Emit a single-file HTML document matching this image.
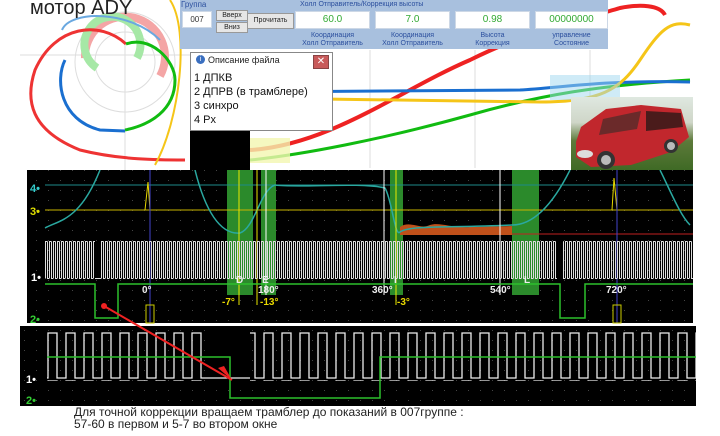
<!DOCTYPE html>
<html><head><meta charset="utf-8"><style>
body{margin:0;width:720px;height:436px;overflow:hidden;background:#fff;font-family:"Liberation Sans","Noto Sans CJK SC",sans-serif;position:relative}
.a{position:absolute}
.box{position:absolute;background:#fff;border:1px solid #cdd8e6;font-size:10px;text-align:center;color:#3a3}
.lbl{position:absolute;font-size:7px;color:#2b4f9e;text-align:center;line-height:8px}
.btn{position:absolute;background:#e6e6e6;border:1px solid #999;font-size:7px;text-align:center;color:#222}
</style></head><body>
<svg class="a" style="left:0;top:0" width="720" height="172">
 <g stroke="#ddd" fill="none">
  <line x1="20" y1="55" x2="190" y2="55"/><line x1="125" y1="0" x2="125" y2="170"/>
  <circle cx="125" cy="62" r="50"/><circle cx="125" cy="62" r="30"/>
  <line x1="370" y1="50" x2="370" y2="168"/><line x1="475" y1="50" x2="475" y2="168"/><line x1="590" y1="50" x2="590" y2="100"/>
 </g>
 <path d="M125 58 m-40 0 a40 40 0 1 1 75 18" stroke="#f4a5a5" stroke-width="8" fill="none"/>
 <path d="M125 58 m-28 10 a28 28 0 1 1 40 -10" stroke="#a6e8a6" stroke-width="8" fill="none"/>
 <path d="M62 30 C70 10 130 10 160 40" stroke="#6aa8e0" stroke-width="2" fill="none"/>
 <path d="M126 44 C100 20 55 25 35 70 C25 100 30 130 80 150 C120 160 160 160 185 160" stroke="#e33" stroke-width="3" fill="none"/>
 <path d="M126 44 C150 35 175 60 175 80 C175 110 150 125 125 130" stroke="#1b1" stroke-width="3" fill="none"/>
 <path d="M65 60 C55 80 60 120 100 130 L125 131" stroke="#1a6fd0" stroke-width="3" fill="none"/>
 <path d="M170 0 C190 30 180 120 155 165" stroke="#f5c518" stroke-width="2" fill="none"/>
 <path d="M250 150 C330 145 400 90 470 60 C530 30 580 20 620 8 C640 4 660 5 665 15" stroke="#e22" stroke-width="4" fill="none"/>
 <path d="M250 160 C300 155 380 140 470 115 C540 95 600 85 690 80" stroke="#1b1" stroke-width="3" fill="none"/>
 <path d="M250 92 L520 90 C560 88 600 80 690 82" stroke="#1a6fd0" stroke-width="3" fill="none"/>
 <path d="M250 98 L540 102 C600 102 620 90 640 60 C660 30 670 20 690 25" stroke="#f5c518" stroke-width="3" fill="none"/>
 <rect x="550" y="75" width="70" height="25" fill="#9fd8f0" opacity=".5"/>
 <rect x="250" y="138" width="40" height="25" fill="#f3f6b0" opacity=".8"/>
 <rect x="190" y="128" width="60" height="44" fill="#000"/>
</svg>
<div class="a" style="left:30px;top:-3px;font-size:20px;color:#222">мотор ADY</div>
<div class="a" style="left:180px;top:0;width:428px;height:49px;background:#a8c0de"></div>
<div class="lbl" style="left:181px;top:1px;font-size:8px">Группа</div>
<div class="lbl" style="left:300px;top:1px;width:300px;text-align:left;font-size:7px">Холл Отправитель/Коррекция высоты</div>
<div class="box" style="left:182px;top:11px;width:28px;height:15px;line-height:15px;color:#333;font-size:8px">007</div>
<div class="btn" style="left:216px;top:10px;width:30px;height:9px;line-height:9px">Вверх</div>
<div class="btn" style="left:216px;top:22px;width:30px;height:9px;line-height:9px">Вниз</div>
<div class="btn" style="left:247px;top:13px;width:45px;height:14px;line-height:14px">Прочитать</div>
<div class="box" style="left:295px;top:11px;width:73px;height:16px;line-height:16px">60.0</div>
<div class="box" style="left:375px;top:11px;width:73px;height:16px;line-height:16px">7.0</div>
<div class="box" style="left:455px;top:11px;width:73px;height:16px;line-height:16px">0.98</div>
<div class="box" style="left:535px;top:11px;width:71px;height:16px;line-height:16px">00000000</div>
<div class="lbl" style="left:295px;top:32px;width:75px">Координация<br>Холл Отправитель</div>
<div class="lbl" style="left:375px;top:32px;width:75px">Координация<br>Холл Отправитель</div>
<div class="lbl" style="left:455px;top:32px;width:75px">Высота<br>Коррекция</div>
<div class="lbl" style="left:535px;top:32px;width:73px">управление<br>Состояние</div>
<div class="a" style="left:190px;top:52px;width:141px;height:77px;background:#fff;border:1px solid #888"></div>
<div class="a" style="left:196px;top:55px;width:9px;height:9px;border-radius:50%;background:#3a6fc0;color:#fff;font-size:7px;text-align:center;line-height:9px">i</div>
<div class="a" style="left:208px;top:55px;font-size:9px;color:#222">Описание файла</div>
<div class="a" style="left:313px;top:55px;width:14px;height:12px;background:#c85a5a;border:1px solid #844;color:#fff;font-size:10px;line-height:12px;text-align:center">✕</div>
<div class="a" style="left:194px;top:71px;font-size:11px;line-height:14px;color:#111">1 ДПКВ<br>2 ДПРВ (в трамблере)<br>3 синхро<br>4 Px</div>
<div class="a" style="left:571px;top:97px;width:122px;height:73px;background:linear-gradient(#dfe8e0 0%,#cfd6c8 35%,#5d7a3a 60%,#3f6a25 100%)"></div>
<svg class="a" style="left:571px;top:97px" width="122" height="73">
 <path d="M5 45 L10 30 L35 12 L70 8 L110 12 L118 40 L100 55 L60 68 L20 70 L5 60Z" fill="#c1272d"/>
 <path d="M32 22 L70 14 L66 32 L28 38Z" fill="#6b2a2a"/>
 <path d="M75 14 L110 16 L112 30 L75 34Z" fill="#4a1b1b"/>
 <circle cx="35" cy="63" r="9" fill="#333"/><circle cx="35" cy="63" r="5" fill="#bbb"/>
 <circle cx="100" cy="49" r="7" fill="#333"/><circle cx="100" cy="49" r="4" fill="#bbb"/>
 <ellipse cx="14" cy="57" rx="8" ry="4" fill="#ddd"/>
</svg>
<svg class="a" style="left:0;top:170px" width="720" height="266">
 <defs>
  <pattern id="p1" x="45" y="71" width="4" height="40" patternUnits="userSpaceOnUse"><path d="M0.5 0.5V37.5M2.5 0.5V37.5M0 0.5H2.5M2 37.5H4.5" stroke="#ddd" stroke-width="1" fill="none"/></pattern>
  <pattern id="p2" x="47" y="162" width="18" height="48" patternUnits="userSpaceOnUse"><path d="M0 46H1V1H10V46H18" stroke="#eee" stroke-width="1.3" fill="none"/></pattern>
  <pattern id="g" width="12" height="10" patternUnits="userSpaceOnUse"><rect x="0" y="0" width="1" height="1" fill="#444"/></pattern>
 </defs>
 <rect x="27" y="0" width="666" height="153" fill="#000"/>
 <rect x="27" y="0" width="666" height="153" fill="url(#g)"/>
 <rect x="227" y="0" width="26" height="125" fill="#2b8a2b"/>
 <rect x="261" y="0" width="15" height="125" fill="#2b8a2b"/>
 <rect x="390" y="0" width="13" height="125" fill="#2b8a2b"/>
 <rect x="512" y="0" width="27" height="125" fill="#2b8a2b"/>
 <line x1="45" y1="15" x2="693" y2="15" stroke="#1e8a8a"/>
 <line x1="45" y1="40" x2="693" y2="40" stroke="#c8b400"/>
 <line x1="400" y1="64" x2="693" y2="64" stroke="#c02020"/>
 <path d="M400 65 L400 57 C410 50 420 60 430 55 C440 52 450 58 470 57 L512 56 L512 65Z" fill="#c0501a"/>
 <path d="M45 58 C60 50 80 50 100 0 M195 0 C205 40 220 65 240 63 C255 58 260 20 275 15 C300 18 360 12 385 18 C392 30 395 68 400 62 C410 55 450 58 512 55 C530 55 550 40 570 0 M660 0 C670 20 680 45 690 55" stroke="#2aa8a0" stroke-width="1.5" fill="none"/>
 <path d="M145 40 L148 12 L150 40 M612 40 L614 8 L617 40" stroke="#e8d800" fill="none"/>
 <line x1="150" y1="0" x2="150" y2="153" stroke="#4444cc"/>
 <line x1="617" y1="0" x2="617" y2="153" stroke="#4444cc"/>
 <line x1="239" y1="0" x2="239" y2="135" stroke="#e8e800"/>
 <line x1="257" y1="0" x2="257" y2="135" stroke="#e8e800"/>
 <line x1="266" y1="0" x2="266" y2="125" stroke="#fff"/>
 <line x1="384" y1="0" x2="384" y2="125" stroke="#fff"/>
 <line x1="396" y1="0" x2="396" y2="135" stroke="#e8e800"/>
 <line x1="500" y1="0" x2="500" y2="125" stroke="#fff"/>
 <rect x="45" y="71" width="648" height="38" fill="url(#p1)"/>
 <rect x="95" y="71" width="5" height="38" fill="#000"/><line x1="95" y1="108.5" x2="100" y2="108.5" stroke="#ddd"/>
 <rect x="557" y="71" width="6" height="38" fill="#000"/>
 <path d="M45 114 H95 V148 H118 V114 H560 V148 H585 V114 H693" stroke="#2cc02c" stroke-width="1.5" fill="none"/>
 <g font-size="10" font-weight="bold" fill="#eee">
  <text x="142" y="123">0°</text><text x="258" y="123">180°</text><text x="372" y="123">360°</text><text x="490" y="123">540°</text><text x="606" y="123">720°</text>
  <text x="236" y="113">D</text><text x="262" y="113">E</text><text x="394" y="113">I</text><text x="524" y="113">L</text>
 </g>
 <g font-size="10" font-weight="bold" fill="#e8d800"><text x="222" y="135">-7°</text><text x="260" y="135">-13°</text><text x="397" y="135">-3°</text></g>
 <g font-size="11" font-weight="bold"><text x="30" y="22" fill="#3cc">4•</text><text x="30" y="45" fill="#dd0">3•</text><text x="31" y="111" fill="#fff">1•</text><text x="30" y="153" fill="#3c3">2•</text></g>
 <rect x="146" y="135" width="8" height="18" fill="none" stroke="#cc0"/><rect x="613" y="135" width="8" height="18" fill="none" stroke="#cc0"/>
 <rect x="20" y="156" width="676" height="80" fill="#000"/>
 <rect x="20" y="156" width="676" height="80" fill="url(#g)"/>
 <rect x="47" y="161" width="649" height="50" fill="url(#p2)"/>
 <rect x="209" y="160" width="41" height="52" fill="#000"/>
 <line x1="209" y1="208" x2="250" y2="208" stroke="#eee" stroke-width="1.3"/>
 <path d="M47 187 H230 V228 H380 V187 H696" stroke="#2cc02c" stroke-width="1.5" fill="none"/>
 <g font-size="11" font-weight="bold"><text x="26" y="213" fill="#fff">1•</text><text x="26" y="234" fill="#3c3">2•</text></g>
 <line x1="104" y1="136" x2="232" y2="210" stroke="#e22" stroke-width="2"/>
 <circle cx="104" cy="136" r="3" fill="#e22"/>
 <path d="M232 210 L218 198 L224 196Z" fill="#e22"/>
</svg>
<div class="a" style="left:74px;top:406px;font-size:12px;line-height:12px;color:#222">Для точной коррекции вращаем трамблер до показаний в 007группе :<br>57-60 в первом и 5-7 во втором окне</div>
</body></html>
